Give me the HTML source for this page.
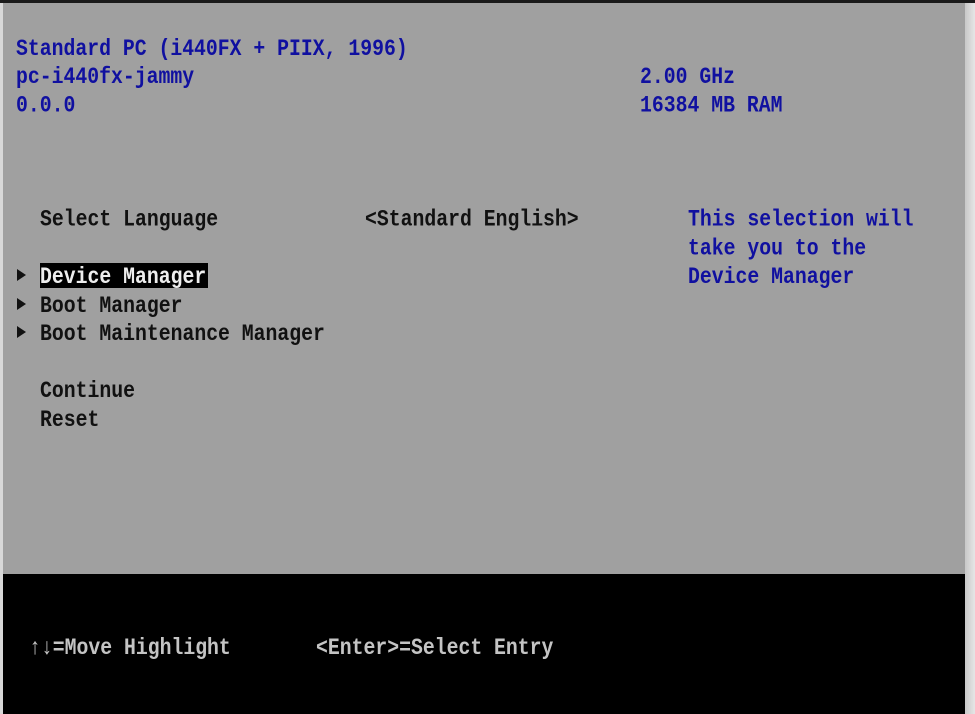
<!DOCTYPE html>
<html><head><meta charset="utf-8"><style>
html,body{margin:0;padding:0;}
body{width:975px;height:714px;position:relative;overflow:hidden;background:#d8d8d8;}
#gray{position:absolute;left:3px;top:3px;width:962px;height:571px;background:#a0a0a0;}
#blk{position:absolute;left:3px;top:574px;width:962px;height:140px;background:#000;}
#rs{position:absolute;left:965px;top:0;width:10px;height:714px;background:linear-gradient(90deg,#c8c8c8,#e6e6e6);}
#top2{position:absolute;left:0;top:0;width:975px;height:3px;background:#1a1a1a;}
.t{position:absolute;font-family:"Liberation Mono",monospace;font-size:19.8px;font-weight:bold;line-height:24px;white-space:pre;transform:scaleY(1.15);transform-origin:0 50%;}
.b{color:#1010a0;}
.k{color:#111;}
.w{color:#c4c4c4;}
.tri{position:absolute;width:0;height:0;border-top:6px solid transparent;border-bottom:6px solid transparent;border-left:9px solid #111;}
</style></head><body>
<div id="gray"></div><div id="blk"></div><div id="rs"></div><div id="top2"></div>
<div class="t b" style="left:16px;top:37px">Standard PC (i440FX + PIIX, 1996)</div>
<div class="t b" style="left:16px;top:65px">pc-i440fx-jammy</div>
<div class="t b" style="left:16px;top:94px">0.0.0</div>
<div class="t b" style="left:640px;top:65px">2.00 GHz</div>
<div class="t b" style="left:640px;top:94px">16384 MB RAM</div>
<div class="t k" style="left:40px;top:208px">Select Language</div>
<div class="t k" style="left:365px;top:208px">&lt;Standard English&gt;</div>
<div class="t b" style="left:688px;top:208px">This selection will</div>
<div class="t b" style="left:688px;top:237px">take you to the</div>
<div class="t b" style="left:688px;top:265px">Device Manager</div>
<div class="tri" style="left:17px;top:269px"></div>
<div class="tri" style="left:17px;top:298px"></div>
<div class="tri" style="left:17px;top:326px"></div>
<div style="position:absolute;left:40px;top:263px;width:168px;height:25px;background:#000"></div>
<div class="t" style="left:40px;top:265px;color:#eee">Device Manager</div>
<div class="t k" style="left:40px;top:294px">Boot Manager</div>
<div class="t k" style="left:40px;top:322px">Boot Maintenance Manager</div>
<div class="t k" style="left:40px;top:379px">Continue</div>
<div class="t k" style="left:40px;top:408px">Reset</div>
<div class="t w" style="left:29px;top:636px">↑↓=Move Highlight</div>
<div class="t w" style="left:316px;top:636px">&lt;Enter&gt;=Select Entry</div>
</body></html>
